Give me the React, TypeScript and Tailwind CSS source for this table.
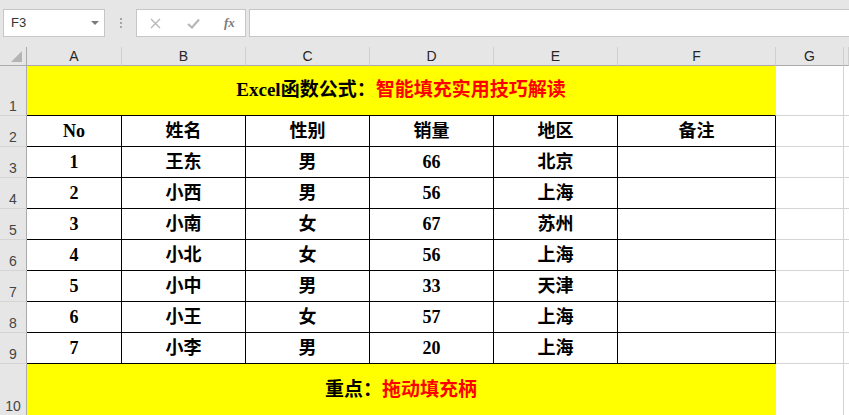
import type { ReactNode } from "react";

const COLS = ["A", "B", "C", "D", "E", "F", "G", ""];

const ROWS: [string, string, string, string, string][] = [
  ["1", "王东", "男", "66", "北京"],
  ["2", "小西", "男", "56", "上海"],
  ["3", "小南", "女", "67", "苏州"],
  ["4", "小北", "女", "56", "上海"],
  ["5", "小中", "男", "33", "天津"],
  ["6", "小王", "女", "57", "上海"],
  ["7", "小李", "男", "20", "上海"],
];

const serif = "font-['Liberation_Serif','Noto_Sans_CJK_SC',serif]";

function RowHead({ n }: { n: number }) {
  return (
    <div className="flex items-end justify-center border-r border-b border-r-[#ababab] border-b-[#d4d4d4] bg-[#e6e6e6] pb-[1px] font-['Liberation_Sans',sans-serif] text-[14px] leading-[16px] text-[#444]">
      {n}
    </div>
  );
}

function Cell({ children }: { children?: ReactNode }) {
  return (
    <div className={`flex items-center justify-center border-r border-b border-black bg-white text-[18px] font-bold text-black ${serif}`}>
      {children}
    </div>
  );
}

function Blank({ last }: { last?: boolean }) {
  return <div className={`border-b border-[#d4d4d4] bg-white ${last ? "" : "border-r"}`} />;
}

export default function App() {
  return (
    <div className="h-[415px] w-[849px] overflow-hidden bg-white">
      {/* toolbar */}
      <div className="flex h-[47px] items-start bg-[#e6e6e6] pt-[9px] pl-[3px]">
        <div className="flex h-[28px] w-[102px] items-center justify-between border border-[#c6c6c6] bg-white pr-[5px] pl-[7px]">
          <span className="font-['Liberation_Sans',sans-serif] text-[13px] text-[#333]">F3</span>
          <span className="h-0 w-0 border-x-[4px] border-t-[4px] border-x-transparent border-t-[#7a7a7a]" />
        </div>
        <div className="ml-[15px] flex h-[28px] flex-col items-center justify-center gap-[2px]">
          <span className="h-[2px] w-[2px] bg-[#a6a6a6]" />
          <span className="h-[2px] w-[2px] bg-[#a6a6a6]" />
          <span className="h-[2px] w-[2px] bg-[#a6a6a6]" />
        </div>
        <div className="ml-[14px] flex h-[28px] w-[110px] items-center border border-[#c6c6c6] bg-white">
          <svg className="ml-[13px]" width="11" height="11" viewBox="0 0 11 11">
            <path d="M1 1 L10 10 M10 1 L1 10" stroke="#b8b8b8" strokeWidth="1.4" fill="none" />
          </svg>
          <svg className="ml-[26px]" width="13" height="11" viewBox="0 0 13 11">
            <path d="M1 6 L5 9.5 L12 1.5" stroke="#b8b8b8" strokeWidth="2.2" fill="none" />
          </svg>
          <span className="ml-[24px] font-['Liberation_Serif',serif] text-[13px] font-bold text-[#7a7a7a] italic">fx</span>
        </div>
        <div className="ml-[3px] h-[28px] flex-1 border border-r-0 border-[#c6c6c6] bg-white" />
      </div>

      {/* sheet */}
      <div className="grid grid-cols-[27px_95px_124px_124px_124px_124px_158px_68px_1fr] grid-rows-[19px_50px_repeat(8,31px)_52px]">
        {/* column headers */}
        <div className="relative border-r border-b border-r-[#ababab] border-b-[#ababab] bg-[#e6e6e6]">
          <span className="absolute right-[4px] bottom-[3px] h-0 w-0 border-b-[11px] border-l-[11px] border-b-[#b4b4b4] border-l-transparent" />
        </div>
        {COLS.map((c, i) => (
          <div
            key={i}
            className="flex items-end justify-center border-r border-b border-r-[#cfcfcf] border-b-[#ababab] bg-[#e6e6e6] font-['Liberation_Sans',sans-serif] text-[14px] leading-[17px] text-[#262626]"
          >
            {c}
          </div>
        ))}

        {/* row 1 */}
        <RowHead n={1} />
        <div className={`col-span-6 flex items-center justify-center border-r border-b border-r-[#ffff00] border-b-black bg-[#ffff00] text-[19px] font-bold ${serif}`}>
          <span className="text-black">Excel函数公式：</span>
          <span className="text-[#ff0000]">智能填充实用技巧解读</span>
        </div>
        <Blank />
        <Blank last />

        {/* row 2 header */}
        <RowHead n={2} />
        <Cell>No</Cell>
        <Cell>姓名</Cell>
        <Cell>性别</Cell>
        <Cell>销量</Cell>
        <Cell>地区</Cell>
        <Cell>备注</Cell>
        <Blank />
        <Blank last />

        {ROWS.map((r, i) => (
          <div key={i} className="contents">
            <RowHead n={i + 3} />
            {r.map((v, j) => (
              <Cell key={j}>{v}</Cell>
            ))}
            <Cell />
            <Blank />
            <Blank last />
          </div>
        ))}

        {/* row 10 */}
        <RowHead n={10} />
        <div className={`col-span-6 flex items-center justify-center border-r border-r-[#ffff00] bg-[#ffff00] text-[19px] font-bold ${serif}`}>
          <span className="text-black">重点：</span>
          <span className="text-[#ff0000]">拖动填充柄</span>
        </div>
        <Blank />
        <Blank last />
      </div>
    </div>
  );
}
